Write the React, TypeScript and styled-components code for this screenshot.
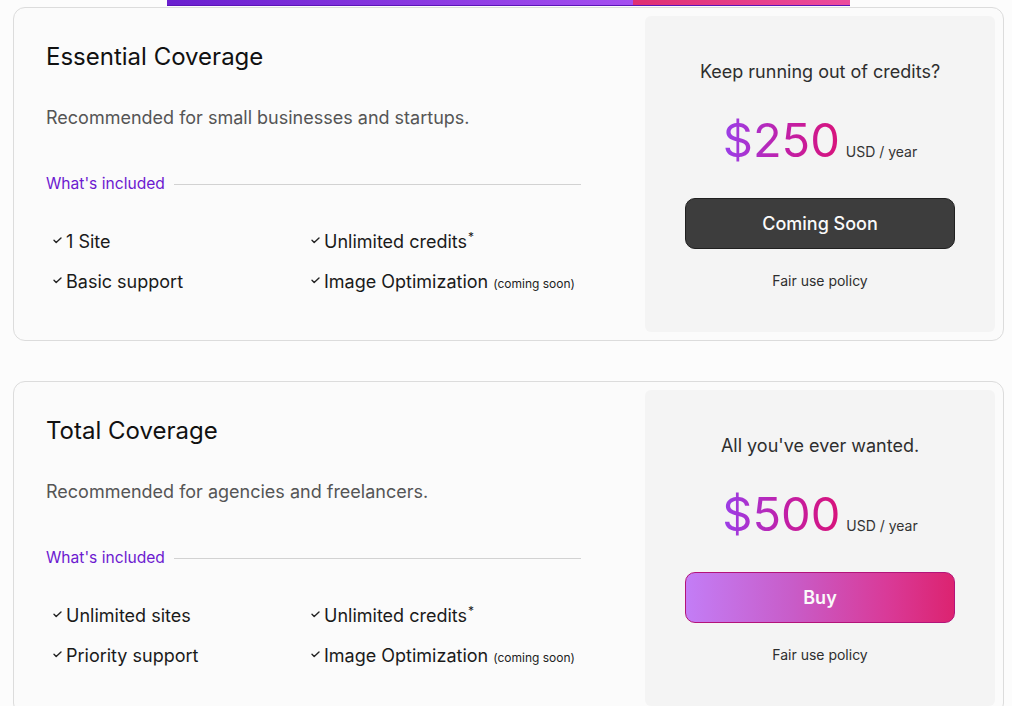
import { FC } from 'react';
import styled, { createGlobalStyle } from 'styled-components';

const GlobalStyle = createGlobalStyle`
  html, body {
    margin: 0;
    padding: 0;
    background: #fcfcfc;
    font-family: Inter, "Noto Sans", "Liberation Sans", sans-serif;
    color: #1a1a1a;
  }
`;

interface Feature {
  label: string;
  star?: boolean;
  note?: string;
}

interface Plan {
  name: string;
  description: string;
  tagline: string;
  price: number;
  cta: string;
  available: boolean;
  features: Feature[];
}

const plans: Plan[] = [
  {
    name: 'Essential Coverage',
    description: 'Recommended for small businesses and startups.',
    tagline: 'Keep running out of credits?',
    price: 250,
    cta: 'Coming Soon',
    available: false,
    features: [
      { label: '1 Site' },
      { label: 'Unlimited credits', star: true },
      { label: 'Basic support' },
      { label: 'Image Optimization', note: '(coming soon)' },
    ],
  },
  {
    name: 'Total Coverage',
    description: 'Recommended for agencies and freelancers.',
    tagline: "All you've ever wanted.",
    price: 500,
    cta: 'Buy',
    available: true,
    features: [
      { label: 'Unlimited sites' },
      { label: 'Unlimited credits', star: true },
      { label: 'Priority support' },
      { label: 'Image Optimization', note: '(coming soon)' },
    ],
  },
];

const Check: FC = () => (
  <CheckIcon width="9" height="7" viewBox="0 0 9 7" aria-hidden>
    <polyline points="1,3.2 3.2,5.4 8,1" fill="none" stroke="#222" strokeWidth="1.4" strokeLinecap="round" strokeLinejoin="round" />
  </CheckIcon>
);

const PlanCard: FC<{ plan: Plan }> = ({ plan }) => (
  <Card>
    <Details>
      <Title>{plan.name}</Title>
      <Description>{plan.description}</Description>
      <IncludedRow>
        <IncludedLabel>What's included</IncludedLabel>
        <Rule />
      </IncludedRow>
      <FeatureGrid>
        {plan.features.map((f) => (
          <FeatureItem key={f.label}>
            <Check />
            <span>
              {f.label}
              {f.star && <Star>*</Star>}
              {f.note && <Note>{f.note}</Note>}
            </span>
          </FeatureItem>
        ))}
      </FeatureGrid>
    </Details>
    <PricePanel>
      <Tagline>{plan.tagline}</Tagline>
      <PriceRow>
        <Amount>${plan.price}</Amount>
        <Period>USD / year</Period>
      </PriceRow>
      <ActionButton $primary={plan.available}>{plan.cta}</ActionButton>
      <PolicyLink>Fair use policy</PolicyLink>
    </PricePanel>
  </Card>
);

const App: FC = () => (
  <>
    <GlobalStyle />
    <Page>
      <TopStrip>
        <StripPurple />
        <StripPink />
      </TopStrip>
      <CardList>
        {plans.map((p) => (
          <PlanCard key={p.name} plan={p} />
        ))}
      </CardList>
    </Page>
  </>
);

export default App;

const Page = styled.div`
  padding: 0 8px 0 13px;
  height: 706px;
  overflow: hidden;
  box-sizing: border-box;
`;

const TopStrip = styled.div`
  display: flex;
  width: 683px;
  height: 6px;
  margin: 0 auto;
  border-bottom: 1px solid #5b14b8;
  box-sizing: border-box;
`;

const StripPurple = styled.div`
  width: 466px;
  background: linear-gradient(90deg, #6a1fcf, #a54ff0);
`;

const StripPink = styled.div`
  flex: 1;
  background: linear-gradient(90deg, #df2f72, #ec4c9e);
`;

const CardList = styled.div`
  display: flex;
  flex-direction: column;
  gap: 40px;
  margin-top: 1px;
`;

const Card = styled.div`
  display: grid;
  grid-template-columns: 1fr 350px;
  height: 334px;
  flex-shrink: 0;
  padding: 8px;
  border: 1px solid #dcdcdc;
  border-radius: 12px;
  background: #fbfbfb;
  box-sizing: border-box;
`;

const Details = styled.div`
  display: flex;
  flex-direction: column;
  padding: 27px 64px 0 24px;
`;

const Title = styled.h2`
  margin: 0;
  font-size: 24px;
  line-height: 28px;
  font-weight: 400;
  color: #111;
`;

const Description = styled.p`
  margin: 35px 0 0;
  font-size: 18px;
  line-height: 24px;
  color: #555;
`;

const IncludedRow = styled.div`
  display: flex;
  align-items: center;
  gap: 9px;
  margin-top: 44px;
`;

const IncludedLabel = styled.span`
  font-size: 15.6px;
  line-height: 20px;
  color: #6d1ad0;
  white-space: nowrap;
`;

const Rule = styled.div`
  flex: 1;
  height: 1px;
  background: #d2d2d2;
`;

const FeatureGrid = styled.div`
  display: grid;
  grid-template-columns: 258px 1fr;
  row-gap: 16px;
  margin-top: 36px;
  padding-left: 7px;
`;

const FeatureItem = styled.div`
  display: flex;
  align-items: flex-start;
  gap: 4px;
  font-size: 18px;
  line-height: 24px;
  color: #1a1a1a;
  white-space: nowrap;
`;

const CheckIcon = styled.svg`
  flex-shrink: 0;
  margin-top: 7px;
`;

const Star = styled.sup`
  font-size: 12px;
  line-height: 0;
  margin-left: 1px;
`;

const Note = styled.span`
  font-size: 12px;
  margin-left: 5px;
  color: #222;
`;

const PricePanel = styled.div`
  display: flex;
  flex-direction: column;
  align-items: stretch;
  padding: 44px 40px 0;
  background: #f4f4f4;
  border-radius: 6px;
  text-align: center;
`;

const Tagline = styled.div`
  font-size: 18px;
  line-height: 24px;
  color: #2e2e2e;
`;

const PriceRow = styled.div`
  display: flex;
  justify-content: center;
  align-items: baseline;
  gap: 6px;
  margin-top: 28px;
  height: 56px;
`;

const Amount = styled.span`
  font-size: 47px;
  line-height: 56px;
  font-weight: 400;
  background: linear-gradient(90deg, #9a3fe9 0%, #c21fa6 55%, #d8137a 100%);
  -webkit-background-clip: text;
  background-clip: text;
  color: transparent;
`;

const Period = styled.span`
  font-size: 14px;
  color: #333;
`;

const ActionButton = styled.button<{ $primary?: boolean }>`
  margin-top: 30px;
  height: 51px;
  border-radius: 10px;
  font-family: inherit;
  font-size: 18px;
  font-weight: ${(p) => (p.$primary ? 600 : 500)};
  color: #fafafa;
  cursor: pointer;
  border: 1px solid ${(p) => (p.$primary ? '#b3137a' : '#202020')};
  background: ${(p) =>
    p.$primary ? 'linear-gradient(90deg, #c37df6 0%, #c85cc8 40%, #d93a98 75%, #dc2370 100%)' : '#3d3d3d'};
`;

const PolicyLink = styled.div`
  margin-top: 22px;
  font-size: 14px;
  line-height: 20px;
  color: #2e2e2e;
`;
